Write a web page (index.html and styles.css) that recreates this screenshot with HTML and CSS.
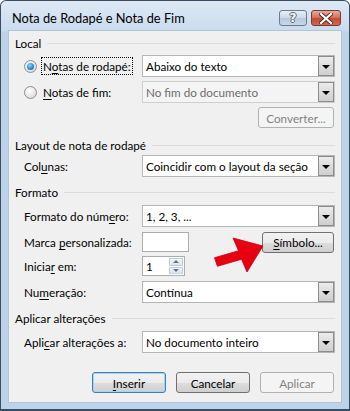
FILE: index.html
```html
<!DOCTYPE html>
<html>
<head>
<meta charset="utf-8">
<link rel="stylesheet" href="styles.css">
</head>
<body>
<div class="window">
  <div class="titlebar">
    <span class="title">Nota de Rodapé e Nota de Fim</span>
    <div class="caption-btns">
      <span class="cbtn help">?</span>
      <span class="cbtn close">
        <svg width="14" height="11" viewBox="0 0 14 11"><path d="M2 1 L12 10 M12 1 L2 10" stroke="#4a2a24" stroke-width="4" stroke-linecap="square"/><path d="M2 1 L12 10 M12 1 L2 10" stroke="#fff" stroke-width="2.2" stroke-linecap="square"/></svg>
      </span>
    </div>
  </div>
  <div class="client">
    <div class="heading h-local">Local</div>
    <div class="row r1">
      <span class="radio checked"></span>
      <span class="rlabel"><span class="focus">N<u>o</u>tas de rodapé:</span></span>
      <div class="combo"><span class="ctext">Abaixo do texto</span><span class="dd"></span></div>
    </div>
    <div class="row r2">
      <span class="radio"></span>
      <span class="rlabel"><span class="nofocus"><u>N</u>otas de fim:</span></span>
      <div class="combo disabled"><span class="ctext">No fim do documento</span><span class="dd"></span></div>
    </div>
    <div class="row btnrow r3">
      <span class="btn disabled w-conv">Converter...</span>
    </div>

    <div class="heading h-layout">Layout de nota de rodapé</div>
    <div class="row r4">
      <span class="label">Col<u>u</u>nas:</span>
      <div class="combo"><span class="ctext">Coincidir com o layout da seção</span><span class="dd"></span></div>
    </div>

    <div class="heading h-formato">Formato</div>
    <div class="row r5">
      <span class="label">Formato do núm<u>e</u>ro:</span>
      <div class="combo"><span class="ctext">1, 2, 3, ...</span><span class="dd"></span></div>
    </div>
    <div class="row r6">
      <span class="label">Marca <u>p</u>ersonalizada:</span>
      <span class="textbox"></span>
      <span class="spacer"></span>
      <span class="btn w-simb"><u>S</u>ímbolo...</span>
    </div>
    <div class="row r7">
      <span class="label">Inicia<u>r</u> em:</span>
      <span class="spin"><span class="spintext">1</span><span class="spinbtns"><span class="sb up"></span><span class="sb down"></span></span></span>
    </div>
    <div class="row r8">
      <span class="label">Nu<u>m</u>eração:</span>
      <div class="combo"><span class="ctext">Contínua</span><span class="dd"></span></div>
    </div>

    <div class="heading h-aplicar">Aplicar alterações</div>
    <div class="row r9">
      <span class="label">Apli<u>c</u>ar alterações a:</span>
      <div class="combo"><span class="ctext">No documento inteiro</span><span class="dd"></span></div>
    </div>

    <div class="footer">
      <span class="btn default"><u>I</u>nserir</span>
      <span class="btn">Cancelar</span>
      <span class="btn disabled">Aplicar</span>
    </div>
  </div>
  <svg class="arrow" width="350" height="411" viewBox="0 0 350 411">
    <polygon points="214.5,257.7 238.5,250.7 233,238 263,246 247,272 241.5,259.3 217.4,266.3" fill="#e60012" stroke="#c4000c" stroke-width="0.8"/>
  </svg>
</div>
</body>
</html>
```
FILE: styles.css
```css
html, body {
  margin: 0;
  padding: 0;
  background: #ffffff;
}
.window {
  position: relative;
  width: 350px;
  height: 411px;
  box-sizing: border-box;
  border: 1px solid #3d4d60;
  border-bottom: 2px solid #3d4d60;
  border-radius: 6px 6px 0 0;
  background: linear-gradient(to bottom, #dfe9f5 0px, #c9dbee 30px, #bcd3ea 31px, #bcd3ea 100%);
  font-family: "Lato", "Noto Sans", sans-serif;
  font-size: 11.7px;
  color: #000;
  display: flex;
  flex-direction: column;
}
.titlebar {
  height: 29px;
  display: flex;
  align-items: flex-start;
  justify-content: space-between;
  padding: 0 2px 0 11px;
}
.title {
  margin-top: 9px;
  font-size: 12.8px;
  line-height: 16px;
  color: #000;
}
.caption-btns {
  display: flex;
  gap: 4px;
  margin-top: 9px;
}
.cbtn {
  height: 16px;
  box-sizing: border-box;
  border: 1px solid #6b7a8c;
  border-radius: 3px;
  display: flex;
  align-items: center;
  justify-content: center;
}
.help {
  width: 28px;
  background: linear-gradient(to bottom, #e7eef7 0%, #ccd9e8 50%, #b5c8dd 51%, #c8d8ea 100%);
  color: #f4f6f9;
  font-family: "DejaVu Sans", sans-serif;
  font-weight: bold;
  font-size: 12px;
  line-height: 14px;
  text-shadow: -1px 0 #5a687a, 1px 0 #5a687a, 0 -1px #5a687a, 0 1px #5a687a;
}
.close {
  width: 30px;
  margin-right: 6px;
  border-color: #7d3a30;
  background: linear-gradient(to bottom, #e9a99b 0%, #d7735f 45%, #c44a33 55%, #d16a4f 100%);
}
.client {
  flex: 1;
  margin: 0 7px 6px 7px;
  background: #f0f0f0;
  border: 1px solid #b0c4da;
  padding: 0 5px 0 5px;
  display: flex;
  flex-direction: column;
}
.heading {
  display: flex;
  align-items: center;
  height: 16px;
  line-height: 16px;
  white-space: nowrap;
  padding-left: 1px;
}
.heading::after {
  content: "";
  flex: 1;
  margin-left: 6px;
  border-top: 1px solid #dcdcdc;
  margin-right: 1px;
}
.h-local { margin-top: 4px; }
.h-layout { margin-top: 9px; }
.h-formato { margin-top: 7px; }
.h-aplicar { margin-top: 7px; }
.row {
  display: flex;
  align-items: center;
  height: 22px;
  padding-left: 10px;
  padding-right: 1px;
}
.r1 { margin-top: 4px; }
.r2 { margin-top: 4px; }
.r3 { margin-top: 4px; height: 21px; }
.r4 { margin-top: 2px; }
.r5 { margin-top: 5px; }
.r6 { margin-top: 5px; height: 20px; }
.r7 { margin-top: 4px; height: 20px; }
.r8 { margin-top: 5px; }
.r9 { margin-top: 5px; }
.label {
  width: 118px;
  flex: none;
  white-space: nowrap;
}
.rlabel {
  width: 100px;
  flex: none;
  white-space: nowrap;
  margin-left: 5px;
}
.focus, .nofocus {
  padding: 1px 1px;
}
.focus {
  outline: 1px dotted #000;
  outline-offset: 0;
}
u {
  text-decoration: underline;
  text-underline-offset: 2px;
  text-decoration-thickness: 1px;
}
.radio {
  width: 13px;
  height: 13px;
  flex: none;
  box-sizing: border-box;
  border-radius: 50%;
  border: 1px solid #8e8f8f;
  background: radial-gradient(circle at 40% 35%, #ffffff 0%, #e3e3e3 60%, #cfcfcf 100%);
  position: relative;
}
.radio.checked::after {
  content: "";
  position: absolute;
  left: 2px;
  top: 2px;
  width: 7px;
  height: 7px;
  border-radius: 50%;
  background: radial-gradient(circle at 40% 35%, #8fd6ff 0%, #2b8ad8 55%, #1a5fa6 100%);
}
.combo {
  flex: 1;
  height: 22px;
  box-sizing: border-box;
  border: 1px solid #b5b5b5;
  background: #fff;
  display: flex;
  align-items: stretch;
}
.combo.disabled {
  background: #f4f4f4;
  border-color: #cfcfcf;
  color: #6d6d6d;
}
.ctext {
  flex: 1;
  padding-left: 3px;
  line-height: 20px;
  white-space: nowrap;
}
.dd {
  width: 16px;
  flex: none;
  box-sizing: border-box;
  border: 1px solid #8c8c8c;
  background: linear-gradient(to bottom, #ececec 0%, #dcdcdc 50%, #cfcfcf 100%);
  display: flex;
  align-items: center;
  justify-content: center;
}
.dd::after {
  content: "";
  width: 0;
  height: 0;
  border-left: 4px solid transparent;
  border-right: 4px solid transparent;
  border-top: 4px solid #000;
  margin-top: 1px;
}
.btnrow {
  justify-content: flex-end;
  padding-right: 2px;
}
.btn {
  height: 21px;
  width: 74px;
  box-sizing: border-box;
  border: 1px solid #707070;
  border-radius: 3px;
  background: linear-gradient(to bottom, #f2f2f2 0%, #ebebeb 50%, #dddddd 51%, #cfcfcf 100%);
  display: flex;
  align-items: center;
  justify-content: center;
  line-height: 16px;
  white-space: nowrap;
}
.btn.disabled {
  border-color: #adb2b5;
  background: #f4f4f4;
  color: #838383;
}
.btn.default {
  border-color: #3c7fb1;
  box-shadow: inset 0 0 0 1px #9fd8f6;
}
.w-conv { width: 76px; }
.w-simb { width: 72px; }
.r6 { padding-right: 2px; }
.textbox {
  width: 47px;
  height: 20px;
  box-sizing: border-box;
  border: 1px solid #abadb3;
  background: #fff;
  flex: none;
}
.spacer { flex: 1; }
.spin {
  width: 43px;
  height: 20px;
  box-sizing: border-box;
  border: 1px solid #abadb3;
  background: #fff;
  display: flex;
  flex: none;
}
.spintext {
  flex: 1;
  padding-left: 3px;
  line-height: 18px;
}
.spinbtns {
  width: 14px;
  display: flex;
  flex-direction: column;
  padding: 1px;
  gap: 1px;
}
.sb {
  flex: 1;
  box-sizing: border-box;
  border: 1px solid #c6ced8;
  background: linear-gradient(to bottom, #f3f5f8, #dde3ea);
  display: flex;
  align-items: center;
  justify-content: center;
}
.sb.up::after {
  content: "";
  border-left: 3px solid transparent;
  border-right: 3px solid transparent;
  border-bottom: 3px solid #5b7190;
}
.sb.down::after {
  content: "";
  border-left: 3px solid transparent;
  border-right: 3px solid transparent;
  border-top: 3px solid #5b7190;
}
.footer {
  display: flex;
  justify-content: flex-end;
  gap: 10px;
  margin-top: 19px;
  padding-right: 2px;
}
.arrow {
  position: absolute;
  left: -1px;
  top: -1px;
  pointer-events: none;
}
```
